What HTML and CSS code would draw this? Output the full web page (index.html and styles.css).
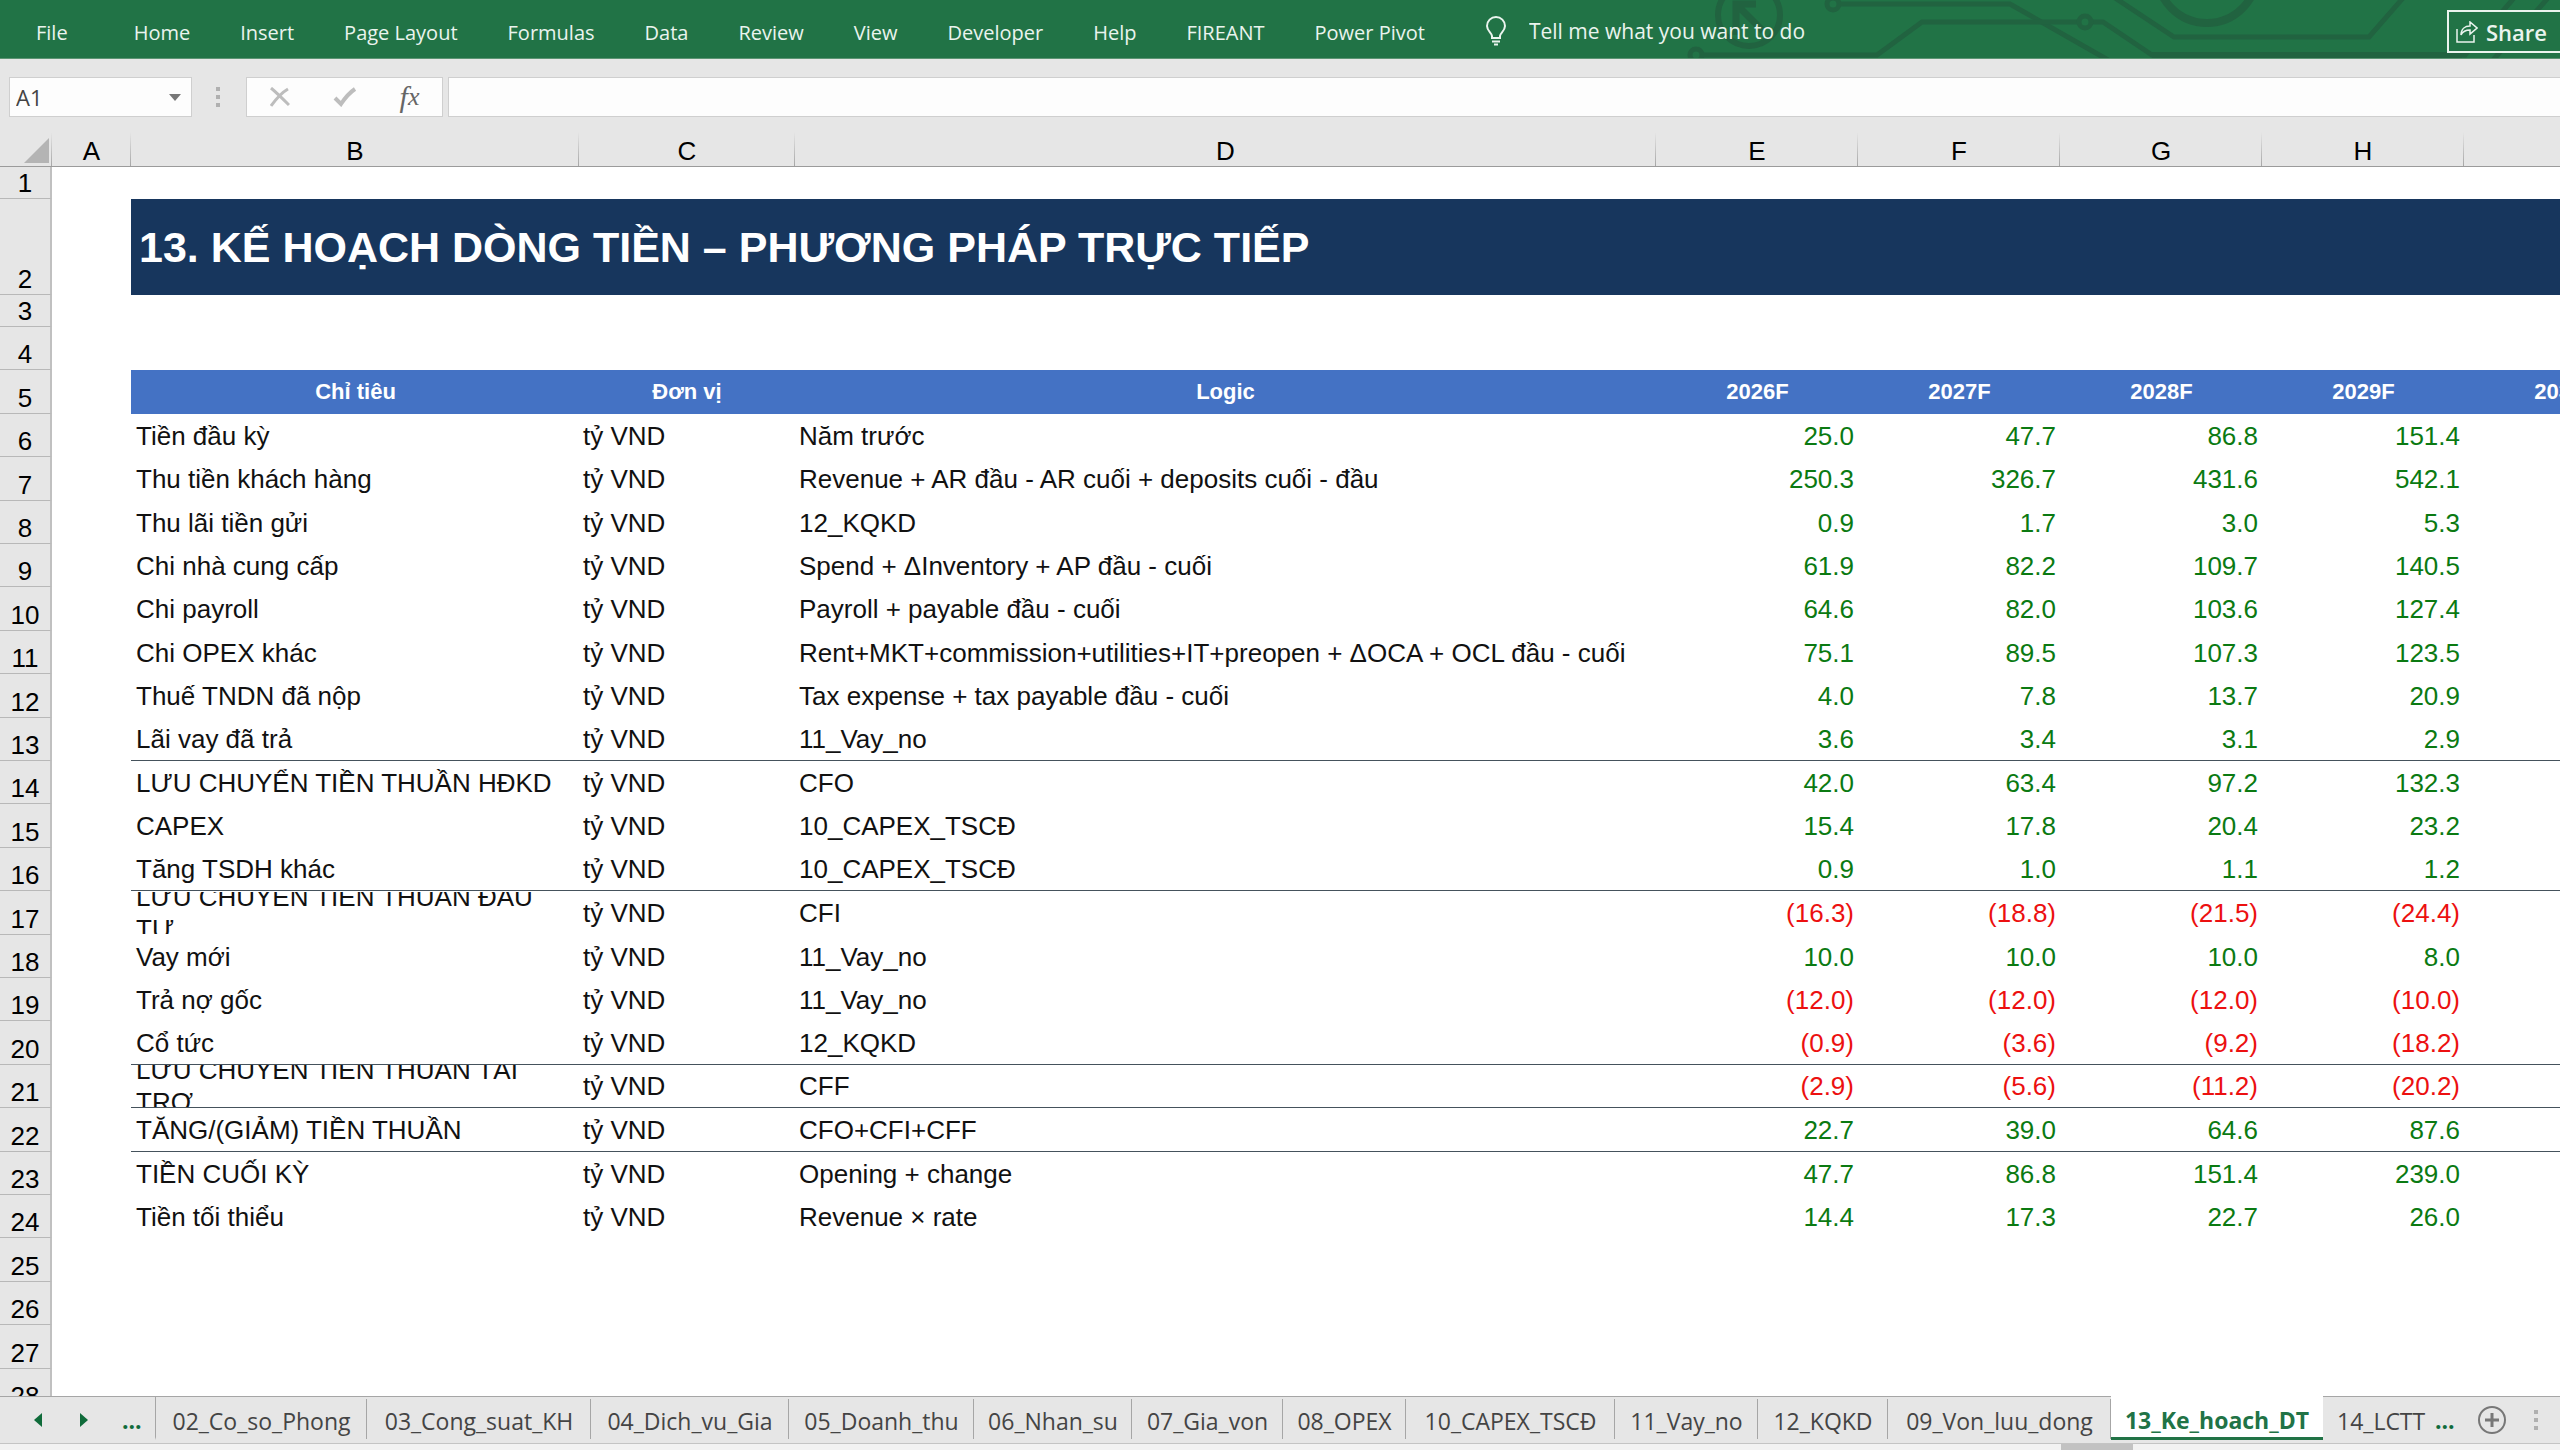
FILE: index.html
```html
<!DOCTYPE html>
<html lang="vi">
<head>
    <meta charset="UTF-8">
    <meta name="viewport" content="width=device-width, initial-scale=1.0">
    <title>13_Ke_hoach_DT</title>
    <link rel="stylesheet" href="styles.css">
</head>
<body>
    <header class="ribbon">
        <svg class="ribbon-art" width="960" height="58" viewBox="1600 0 960 58" fill="none" stroke="#216340" stroke-width="5" aria-hidden="true">
            <circle cx="1749" cy="15" r="31" stroke-width="6"/>
            <path d="M1736 35V4H1756M1737 5L1763 31" stroke-width="7"/>
            <circle cx="1833" cy="4" r="6"/>
            <path d="M1840 4H2010L2108 60"/>
            <circle cx="1696" cy="55" r="6"/>
            <path d="M1703 55H1877L1922 22H2078M2093 22H2103L2152 55H2465L2514 -2"/>
            <circle cx="2085" cy="22" r="6"/>
            <path d="M2115 -2L2174 37H2369L2403 -2M2493 60L2548 -2"/>
            <circle cx="2207" cy="-27" r="50" stroke-width="8"/>
            <path d="M2152 55H2462" stroke-width="6"/>
        </svg>
        <nav class="menu">
            <a href="#" class="menu-file">File</a>
            <a href="#">Home</a>
            <a href="#">Insert</a>
            <a href="#">Page Layout</a>
            <a href="#">Formulas</a>
            <a href="#">Data</a>
            <a href="#">Review</a>
            <a href="#">View</a>
            <a href="#">Developer</a>
            <a href="#">Help</a>
            <a href="#">FIREANT</a>
            <a href="#">Power Pivot</a>
        </nav>
        <div class="tell-me">
            <svg width="22" height="30" viewBox="0 0 22 30" fill="none" stroke="#eaf4ee" stroke-width="2" aria-hidden="true">
                <path d="M7 22V20C7 17 2 15 2 10A9 9 0 0 1 20 10C20 15 15 17 15 20V22Z"/>
                <path d="M7 25.500H15M9 28.500H13"/>
            </svg>
            <input type="text" aria-label="Tell me" placeholder="Tell me what you want to do">
        </div>
        <button type="button" class="share">
            <svg width="22" height="22" viewBox="0 0 22 22" fill="none" stroke="#eaf4ee" stroke-width="1.500" aria-hidden="true">
                <path d="M1 8V21H18V14"/>
                <path d="M5 14C5 8 9 5 14 5V1L21 7L14 13V9C10 9 7 10 5 14Z"/>
            </svg>
            Share
        </button>
    </header>

    <div class="formula-bar">
        <div class="name-box">
            <input type="text" aria-label="Name Box" value="A1">
            <button type="button" aria-label="Show names">
                <svg width="12" height="7" viewBox="0 0 12 7" aria-hidden="true"><path d="M0 0H12L6 7Z" fill="#777"/></svg>
            </button>
        </div>
        <svg class="grip" width="4" height="20" viewBox="0 0 4 20" fill="#b0b0b0" aria-hidden="true">
            <path d="M0 0H4V4H0ZM0 8H4V12H0ZM0 16H4V20H0Z"/>
        </svg>
        <div class="formula-buttons">
            <button type="button" aria-label="Cancel">
                <svg width="20" height="20" viewBox="0 0 20 20" fill="none" stroke="#bdbdbd" stroke-width="3" aria-hidden="true"><path d="M1 1C7 6 13 12 19 18M18 2C11 6 6 12 1 19"/></svg>
            </button>
            <button type="button" aria-label="Enter">
                <svg width="24" height="20" viewBox="0 0 24 20" fill="none" stroke="#bdbdbd" stroke-width="4" aria-hidden="true"><path d="M2 11L8 17C12 11 16 6 22 2"/></svg>
            </button>
            <button type="button" class="fx" aria-label="Insert Function"><i>f</i><i class="fx-x">x</i></button>
        </div>
        <input type="text" class="formula-input" aria-label="Formula">
    </div>

    <main class="sheet">
        <table>
            <colgroup>
                <col class="col-head">
                <col class="col-a">
                <col class="col-b">
                <col class="col-c">
                <col class="col-d">
                <col class="col-year" span="5">
            </colgroup>
            <thead>
                <tr>
                    <th class="corner"><svg width="25" height="25" viewBox="0 0 25 25" aria-hidden="true"><path d="M25 0V25H0Z" fill="#b4b4b4"/></svg></th>
                    <th>A</th><th>B</th><th>C</th><th>D</th><th>E</th><th>F</th><th>G</th><th>H</th><th>I</th>
                </tr>
            </thead>
            <tbody>
                <tr class="short"><th>1</th><td colspan="9"></td></tr>
                <tr class="title"><th>2</th><td></td><td colspan="8">13. KẾ HOẠCH DÒNG TIỀN – PHƯƠNG PHÁP TRỰC TIẾP</td></tr>
                <tr class="short"><th>3</th><td colspan="9"></td></tr>
                <tr><th>4</th><td colspan="9"></td></tr>
                <tr class="fields"><th>5</th><td></td><td>Chỉ tiêu</td><td>Đơn vị</td><td>Logic</td><td>2026F</td><td>2027F</td><td>2028F</td><td>2029F</td><td>2030F</td></tr>
                <tr><th>6</th><td></td><td>Tiền đầu kỳ</td><td>tỷ VND</td><td>Năm trước</td><td>25.0</td><td>47.7</td><td>86.8</td><td>151.4</td><td></td></tr>
                <tr><th>7</th><td></td><td>Thu tiền khách hàng</td><td>tỷ VND</td><td>Revenue + AR đầu - AR cuối + deposits cuối - đầu</td><td>250.3</td><td>326.7</td><td>431.6</td><td>542.1</td><td></td></tr>
                <tr><th>8</th><td></td><td>Thu lãi tiền gửi</td><td>tỷ VND</td><td>12_KQKD</td><td>0.9</td><td>1.7</td><td>3.0</td><td>5.3</td><td></td></tr>
                <tr><th>9</th><td></td><td>Chi nhà cung cấp</td><td>tỷ VND</td><td>Spend + ΔInventory + AP đầu - cuối</td><td>61.9</td><td>82.2</td><td>109.7</td><td>140.5</td><td></td></tr>
                <tr><th>10</th><td></td><td>Chi payroll</td><td>tỷ VND</td><td>Payroll + payable đầu - cuối</td><td>64.6</td><td>82.0</td><td>103.6</td><td>127.4</td><td></td></tr>
                <tr><th>11</th><td></td><td>Chi OPEX khác</td><td>tỷ VND</td><td>Rent+MKT+commission+utilities+IT+preopen + ΔOCA + OCL đầu - cuối</td><td>75.1</td><td>89.5</td><td>107.3</td><td>123.5</td><td></td></tr>
                <tr><th>12</th><td></td><td>Thuế TNDN đã nộp</td><td>tỷ VND</td><td>Tax expense + tax payable đầu - cuối</td><td>4.0</td><td>7.8</td><td>13.7</td><td>20.9</td><td></td></tr>
                <tr class="line"><th>13</th><td></td><td>Lãi vay đã trả</td><td>tỷ VND</td><td>11_Vay_no</td><td>3.6</td><td>3.4</td><td>3.1</td><td>2.9</td><td></td></tr>
                <tr><th>14</th><td></td><td>LƯU CHUYỂN TIỀN THUẦN HĐKD</td><td>tỷ VND</td><td>CFO</td><td>42.0</td><td>63.4</td><td>97.2</td><td>132.3</td><td></td></tr>
                <tr><th>15</th><td></td><td>CAPEX</td><td>tỷ VND</td><td>10_CAPEX_TSCĐ</td><td>15.4</td><td>17.8</td><td>20.4</td><td>23.2</td><td></td></tr>
                <tr class="line"><th>16</th><td></td><td>Tăng TSDH khác</td><td>tỷ VND</td><td>10_CAPEX_TSCĐ</td><td>0.9</td><td>1.0</td><td>1.1</td><td>1.2</td><td></td></tr>
                <tr class="negative"><th>17</th><td></td><td><div class="wrap">LƯU CHUYỂN TIỀN THUẦN ĐẦU TƯ</div></td><td>tỷ VND</td><td>CFI</td><td>(16.3)</td><td>(18.8)</td><td>(21.5)</td><td>(24.4)</td><td></td></tr>
                <tr><th>18</th><td></td><td>Vay mới</td><td>tỷ VND</td><td>11_Vay_no</td><td>10.0</td><td>10.0</td><td>10.0</td><td>8.0</td><td></td></tr>
                <tr class="negative"><th>19</th><td></td><td>Trả nợ gốc</td><td>tỷ VND</td><td>11_Vay_no</td><td>(12.0)</td><td>(12.0)</td><td>(12.0)</td><td>(10.0)</td><td></td></tr>
                <tr class="negative line"><th>20</th><td></td><td>Cổ tức</td><td>tỷ VND</td><td>12_KQKD</td><td>(0.9)</td><td>(3.6)</td><td>(9.2)</td><td>(18.2)</td><td></td></tr>
                <tr class="negative line"><th>21</th><td></td><td><div class="wrap">LƯU CHUYỂN TIỀN THUẦN TÀI TRỢ</div></td><td>tỷ VND</td><td>CFF</td><td>(2.9)</td><td>(5.6)</td><td>(11.2)</td><td>(20.2)</td><td></td></tr>
                <tr class="line"><th>22</th><td></td><td>TĂNG/(GIẢM) TIỀN THUẦN</td><td>tỷ VND</td><td>CFO+CFI+CFF</td><td>22.7</td><td>39.0</td><td>64.6</td><td>87.6</td><td></td></tr>
                <tr><th>23</th><td></td><td>TIỀN CUỐI KỲ</td><td>tỷ VND</td><td>Opening + change</td><td>47.7</td><td>86.8</td><td>151.4</td><td>239.0</td><td></td></tr>
                <tr><th>24</th><td></td><td>Tiền tối thiểu</td><td>tỷ VND</td><td>Revenue × rate</td><td>14.4</td><td>17.3</td><td>22.7</td><td>26.0</td><td></td></tr>
                <tr><th>25</th><td colspan="9"></td></tr>
                <tr><th>26</th><td colspan="9"></td></tr>
                <tr><th>27</th><td colspan="9"></td></tr>
                <tr><th>28</th><td colspan="9"></td></tr>
            </tbody>
        </table>
    </main>

    <footer>
        <div class="sheet-bar">
            <div class="sheet-nav">
                <button type="button" aria-label="Previous sheet"><svg width="8" height="14" viewBox="0 0 8 14" aria-hidden="true"><path d="M8 0V14L0 7Z" fill="#0f6b3a"/></svg></button>
                <button type="button" aria-label="Next sheet"><svg width="8" height="14" viewBox="0 0 8 14" aria-hidden="true"><path d="M0 0V14L8 7Z" fill="#0f6b3a"/></svg></button>
                <button type="button" class="more">...</button>
            </div>
            <div class="tabs">
                <button type="button">02_Co_so_Phong</button>
                <button type="button">03_Cong_suat_KH</button>
                <button type="button">04_Dich_vu_Gia</button>
                <button type="button">05_Doanh_thu</button>
                <button type="button">06_Nhan_su</button>
                <button type="button">07_Gia_von</button>
                <button type="button">08_OPEX</button>
                <button type="button">10_CAPEX_TSCĐ</button>
                <button type="button">11_Vay_no</button>
                <button type="button">12_KQKD</button>
                <button type="button">09_Von_luu_dong</button>
                <button type="button" class="active">13_Ke_hoach_DT</button>
                <button type="button" class="last">14_LCTT</button>
            </div>
            <div class="sheet-tools">
                <button type="button" class="more">...</button>
                <button type="button" aria-label="New sheet">
                    <svg width="30" height="30" viewBox="0 0 30 30" fill="none" stroke="#777" aria-hidden="true"><circle cx="15" cy="15" r="13" stroke-width="2"/><path d="M15 8V22M8 15H22" stroke-width="3"/></svg>
                </button>
                <svg class="grip" width="4" height="20" viewBox="0 0 4 20" fill="#b0b0b0" aria-hidden="true">
                    <path d="M0 0H4V4H0ZM0 8H4V12H0ZM0 16H4V20H0Z"/>
                </svg>
            </div>
        </div>
        <div class="scroll-track"><div class="scroll-thumb"></div></div>
    </footer>
</body>
</html>
```
FILE: styles.css
```css
* {
    box-sizing: border-box;
}
body {
    margin: 0;
    height: 100vh;
    display: flex;
    flex-direction: column;
    overflow: hidden;
    background-color: #e6e6e6;
    font-family: "Open Sans", "Noto Sans", sans-serif;
}
button,
input {
    margin: 0;
    padding: 0;
    border: none;
    background: none;
    font-family: inherit;
    color: inherit;
}
button {
    display: flex;
    align-items: center;
    justify-content: center;
}

/* Ribbon */
.ribbon {
    position: relative;
    display: flex;
    align-items: center;
    height: 59px;
    padding-left: 36px;
    background-color: #217346;
    border-bottom: 1px solid #5c9473;
    color: #eaf4ee;
}
.ribbon-art {
    position: absolute;
    top: 0;
    right: 0;
}
.menu {
    display: flex;
    gap: 50px;
    padding-top: 6px;
    font-size: 20px;
    white-space: nowrap;
}
.menu a {
    color: inherit;
    text-decoration: none;
}
.menu-file {
    margin-right: 16px;
}
.tell-me {
    position: relative;
    display: flex;
    align-items: center;
    gap: 22px;
    margin-left: 60px;
    padding-top: 4px;
}
.tell-me input {
    width: 300px;
    font-size: 21px;
}
.tell-me input::placeholder {
    color: #eaf4ee;
}
.share {
    position: relative;
    justify-content: flex-start;
    gap: 8px;
    width: 113px;
    height: 43px;
    margin-top: 5px;
    margin-left: auto;
    padding-left: 7px;
    border: 2px solid #eaf4ee;
    border-right: none;
    background-color: #217346;
    font-size: 22px;
    font-weight: 600;
}

/* Formula bar */
.formula-bar {
    display: flex;
    align-items: center;
    padding: 18px 0 0 9px;
}
.name-box,
.formula-buttons,
.formula-input {
    height: 40px;
    background-color: #fdfdfd;
    border: 1px solid #cfcfcf;
}
.name-box {
    display: flex;
    width: 183px;
    padding: 0 10px 0 6px;
    color: #444;
}
.name-box input {
    flex: 1;
    min-width: 0;
    font-size: 22px;
}
.formula-bar .grip {
    margin: 0 26px 0 24px;
}
.formula-buttons {
    display: grid;
    grid-template-columns: repeat(3, 1fr);
    width: 197px;
    margin-right: 5px;
}
.fx {
    color: #666;
    font-family: "Liberation Serif", serif;
    font-size: 30px;
    line-height: 30px;
}
.fx-x {
    font-size: 26px;
}
.formula-input {
    flex: 1;
    border-right: none;
    padding: 0 8px;
    font-size: 22px;
}

/* Grid */
.sheet {
    flex: 1;
    min-height: 0;
    overflow: hidden;
    background: linear-gradient(#e6e6e6 50px, #fff 50px);
}
table {
    width: 2666px;
    table-layout: fixed;
    border-collapse: separate;
    border-spacing: 0;
    font-family: "Liberation Sans", Arial, sans-serif;
    font-size: 26px;
    line-height: 26px;
    color: #111;
}
.col-head {
    width: 52px;
}
.col-a {
    width: 79px;
}
.col-b {
    width: 448px;
}
.col-c {
    width: 216px;
}
.col-d {
    width: 861px;
}
.col-year {
    width: 202px;
}
th,
td {
    height: 43px;
    padding: 0 4px 0 5px;
    text-align: left;
    white-space: nowrap;
}
th {
    padding: 0 0 2px;
    background-color: #e6e6e6;
    font-weight: normal;
    text-align: center;
    vertical-align: bottom;
    color: #000;
}
thead th {
    height: 50px;
    border-bottom: 1px solid #9b9b9b;
    background: linear-gradient(#e6e6e6, #a6a6a6) right bottom / 1px 34px no-repeat #e6e6e6;
}
thead .corner {
    padding: 0 3px 3px 0;
    text-align: right;
    line-height: 0;
}
tbody th {
    border-right: 2px solid #c0c0c0;
    border-bottom: 1px solid #b8b8b8;
}
tbody tr:nth-child(5n) > *,
tbody tr:nth-child(5n + 2) > * {
    height: 44px;
}
tbody .short > * {
    height: 32px;
}
tbody tr.title > * {
    height: 96px;
}
.title td + td {
    padding-left: 8px;
    background-color: #17365d;
    font-size: 43px;
    font-weight: bold;
    color: #fff;
}
td:nth-child(4),
td:nth-child(5) {
    padding-left: 4px;
}
td:nth-child(n + 6) {
    padding-right: 4px;
    text-align: right;
    color: #0b7a12;
}
.fields td + td {
    background-color: #4472c4;
    font-size: 22px;
    font-weight: bold;
    text-align: center;
    color: #fff;
}
.negative td:nth-child(n + 6) {
    color: #ec1010;
}
.line td + td {
    border-bottom: 1px solid #45525c;
}
.wrap {
    display: flex;
    align-items: center;
    height: 42px;
    overflow: hidden;
    line-height: 32px;
    white-space: normal;
}

/* Sheet tabs */
.sheet-bar {
    display: flex;
    height: 48px;
    border-top: 1px solid #a6a6a6;
    border-bottom: 1px solid #c4c4c4;
    font-size: 23px;
    color: #444;
}
.sheet-bar button {
    font-size: 23px;
}
.sheet-nav {
    display: flex;
    align-items: center;
    width: 155px;
    padding-left: 34px;
    gap: 38px;
}
.sheet-bar .more {
    font-weight: bold;
    color: #0f6b3a;
}
.sheet-nav .more {
    margin-left: -4px;
}
.tabs {
    display: grid;
    grid-template-columns: 212px 224px 198px 185px 158px 151px 123px 209px 143px 130px 223px 212px 112px;
}
.tabs button {
    height: 43px;
    padding-top: 7px;
    border-bottom: 3px solid transparent;
    background: linear-gradient(#a6a6a6, #a6a6a6) right 2px / 1px 40px no-repeat;
    white-space: nowrap;
}
.tabs button:first-child {
    border-left: 1px solid #a6a6a6;
}
.tabs .active {
    height: 44px;
    margin-top: -1px;
    border-bottom-color: #217346;
    background: #fff;
    font-weight: bold;
    color: #217346;
}
.tabs .last {
    justify-content: flex-start;
    padding-left: 14px;
    background: none;
}
.sheet-tools {
    display: flex;
    align-items: center;
    gap: 22px;
}
.sheet-tools .grip {
    margin-left: 5px;
}
.scroll-track {
    height: 6px;
    padding-left: 80.500%;
    background-color: #f2f2f2;
}
.scroll-thumb {
    width: 72px;
    height: 6px;
    background-color: #c2c2c2;
}
```
